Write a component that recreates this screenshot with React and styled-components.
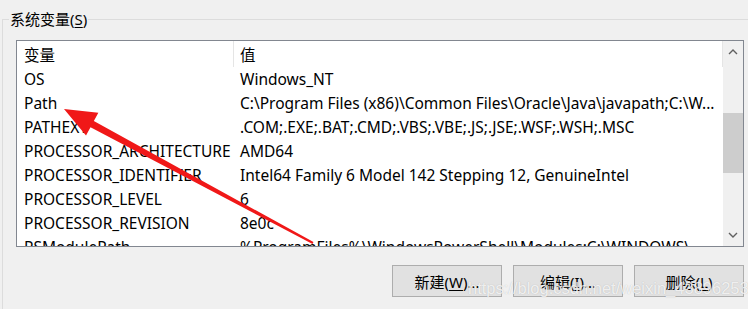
import React from 'react'
import styled, { createGlobalStyle } from 'styled-components'

const GlobalStyle = createGlobalStyle`
  html, body {
    margin: 0;
    padding: 0;
    background: #f0f0f0;
  }
  body {
    font-family: "Noto Sans", "Noto Sans CJK SC", sans-serif;
    font-size: 15.5px;
    color: #000;
  }
`

const Page = styled.div`
  position: relative;
  width: 748px;
  height: 309px;
  overflow: hidden;
  background: #f0f0f0;
`

const Group = styled.fieldset`
  margin: 9px 0 0 2px;
  padding: 0;
  height: 320px;
  border: 1px solid #dcdcdc;
  border-right: none;
  border-bottom: none;
  min-width: 0;
`

const Legend = styled.legend`
  margin-left: 6px;
  padding: 0 1px;
  line-height: 20px;
  font-size: 15px;
`

const Key = styled.span`
  text-decoration: underline;
  text-underline-offset: 2px;
`

const List = styled.div`
  display: flex;
  margin: 11px 0 0 13px;
  width: 726px;
  height: 205px;
  border: 1px solid #828790;
  background: #fff;
`

const Table = styled.div`
  flex: 1;
  overflow: hidden;
  min-width: 0;
`

const Row = styled.div`
  display: grid;
  grid-template-columns: 217px 1fr;
  height: ${p => (p.$head ? 26 : 24)}px;
  align-items: center;
  white-space: nowrap;
`

const Cell = styled.div`
  height: 100%;
  display: flex;
  align-items: center;
  padding-left: ${p => (p.$first ? 7 : 6)}px;
  overflow: hidden;
  border-right: ${p => (p.$head ? '1px solid #e5e5e5' : 'none')};
`

const Scrollbar = styled.div`
  width: 20px;
  display: flex;
  flex-direction: column;
  background: #f0f0f0;
`

const ArrowBtn = styled.div`
  height: 22px;
  display: flex;
  align-items: center;
  justify-content: center;
`

const Track = styled.div`
  flex: 1;
  padding-top: ${p => p.$offset}px;
`

const Thumb = styled.div`
  height: ${p => p.$size}px;
  background: #cdcdcd;
`

const Buttons = styled.div`
  display: flex;
  justify-content: flex-end;
  gap: 11px;
  margin: 18px 4px 0 0;
`

const Button = styled.button`
  width: 110px;
  height: 32px;
  background: #e1e1e1;
  border: 1px solid #adadad;
  font-family: inherit;
  font-size: 15px;
  color: #000;
  padding: 0;
`

const Overlay = styled.svg`
  position: absolute;
  left: 0;
  top: 0;
  pointer-events: none;
`

const Watermark = styled.div`
  position: absolute;
  left: 468px;
  top: 279px;
  font-family: "Liberation Sans", Arial, sans-serif;
  font-size: 16.5px;
  color: rgba(255, 255, 255, 0.8);
  text-shadow: 0 0 1px rgba(90, 90, 90, 0.35);
  white-space: nowrap;
  pointer-events: none;
`

const vars = [
  ['OS', 'Windows_NT'],
  ['Path', 'C:\\Program Files (x86)\\Common Files\\Oracle\\Java\\javapath;C:\\W...'],
  ['PATHEXT', '.COM;.EXE;.BAT;.CMD;.VBS;.VBE;.JS;.JSE;.WSF;.WSH;.MSC'],
  ['PROCESSOR_ARCHITECTURE', 'AMD64'],
  ['PROCESSOR_IDENTIFIER', 'Intel64 Family 6 Model 142 Stepping 12, GenuineIntel'],
  ['PROCESSOR_LEVEL', '6'],
  ['PROCESSOR_REVISION', '8e0c'],
  ['PSModulePath', '%ProgramFiles%\\WindowsPowerShell\\Modules;C:\\WINDOWS\\...'],
]

const Chevron = ({ down }) => (
  <svg width="10" height="6" viewBox="0 0 10 6">
    <path
      d={down ? 'M1 1 L5 5 L9 1' : 'M1 5 L5 1 L9 5'}
      fill="none"
      stroke="#606060"
      strokeWidth="1.4"
    />
  </svg>
)

function arrowPoints(tail, tip) {
  const dx = tip[0] - tail[0]
  const dy = tip[1] - tail[1]
  const len = Math.hypot(dx, dy)
  const ux = dx / len
  const uy = dy / len
  const nx = -uy
  const ny = ux
  const headLen = 32
  const headHalf = 13
  const bx = tip[0] - ux * headLen
  const by = tip[1] - uy * headLen
  const pts = [
    [tail[0] + nx * 1, tail[1] + ny * 1],
    [bx + nx * 3.5, by + ny * 3.5],
    [bx + nx * headHalf, by + ny * headHalf],
    tip,
    [bx - nx * headHalf, by - ny * headHalf],
    [bx - nx * 3.5, by - ny * 3.5],
    [tail[0] - nx * 1, tail[1] - ny * 1],
  ]
  return pts.map(p => p.join(',')).join(' ')
}

export default function App() {
  return (
    <Page>
      <GlobalStyle />
      <Group>
        <Legend>系统变量(<Key>S</Key>)</Legend>
        <List>
          <Table>
            <Row $head>
              <Cell $head $first>变量</Cell>
              <Cell $head>值</Cell>
            </Row>
            {vars.map(([name, value]) => (
              <Row key={name}>
                <Cell $first>{name}</Cell>
                <Cell>{value}</Cell>
              </Row>
            ))}
          </Table>
          <Scrollbar>
            <ArrowBtn><Chevron /></ArrowBtn>
            <Track $offset={50}>
              <Thumb $size={60} />
            </Track>
            <ArrowBtn><Chevron down /></ArrowBtn>
          </Scrollbar>
        </List>
        <Buttons>
          <Button>新建(<Key>W</Key>)...</Button>
          <Button>编辑(<Key>I</Key>)...</Button>
          <Button>删除(<Key>L</Key>)</Button>
        </Buttons>
      </Group>
      <Overlay width="748" height="309">
        <polygon points={arrowPoints([313, 243], [64, 109])} fill="#f01818" />
      </Overlay>
      <Watermark>https://blog.csdn.net/weixin_43896253</Watermark>
    </Page>
  )
}
